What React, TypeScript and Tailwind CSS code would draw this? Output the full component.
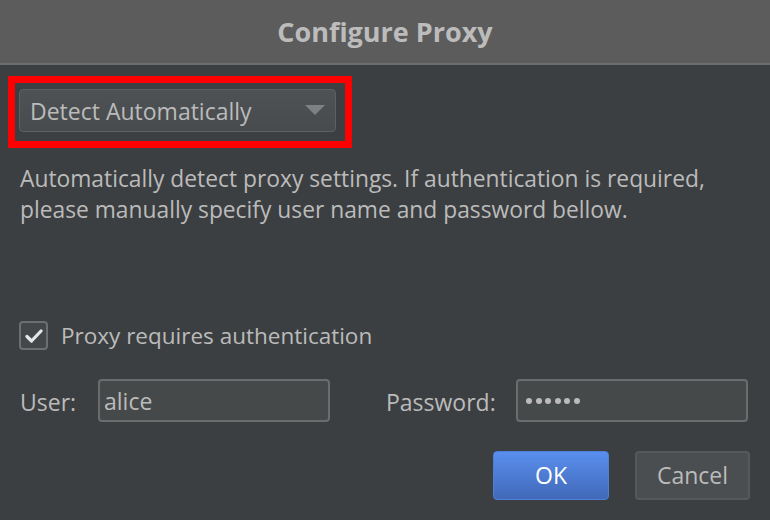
import React from "react";

export default function App() {
  const font = { fontFamily: '"Open Sans", "Noto Sans", sans-serif' };
  return (
    <div className="w-[770px] h-[520px] bg-[#3c3f41] flex flex-col overflow-hidden text-[#bbbbbb]" style={font}>
      <div className="h-[65px] bg-[#5c5c5c] border-b-2 border-[#6e6e6e] flex items-center justify-center shrink-0">
        <span className="text-[27px] font-bold text-[#bcbcbc] leading-none">Configure Proxy</span>
      </div>
      <div className="flex flex-col px-[8px] pt-[11px]">
        <div className="w-[344px] h-[72px] border-[7px] border-[#ff0000] pl-[4px] pt-[6px]">
          <div className="w-[317px] h-[43px] rounded-[4px] border border-[#5e6162] bg-gradient-to-b from-[#4e5254] to-[#474b4d] flex items-center justify-between pl-[10px] pr-[10px]">
            <span className="text-[23px] leading-none pt-[2px]">Detect Automatically</span>
            <svg width="20" height="11" viewBox="0 0 20 11">
              <polygon points="0,0 20,0 10,10" fill="#7e8183" />
            </svg>
          </div>
        </div>
      </div>
      <div className="px-[20px] pt-[15px] text-[22.8px] leading-[31px]">
        <p>Automatically detect proxy settings. If authentication is required,</p>
        <p>please manually specify user name and password bellow.</p>
      </div>
      <div className="px-[19px] pt-[96px] flex items-center gap-[13px]">
        <div className="w-[29px] h-[29px] rounded-[4px] border-2 border-[#6c6e70] bg-[#43474a] flex items-center justify-center">
          <svg width="18" height="14" viewBox="0 0 18 14">
            <path d="M2 7.5 L6.5 12 L16 2" stroke="#e6e6e6" strokeWidth="3.2" fill="none" strokeLinecap="round" strokeLinejoin="round" />
          </svg>
        </div>
        <span className="text-[22.5px] leading-none pt-[2px]">Proxy requires authentication</span>
      </div>
      <div className="px-[20px] pt-[29px] flex items-center">
        <span className="text-[23px] w-[78px] leading-none pt-[4px]">User:</span>
        <div className="w-[232px] h-[43px] rounded-[4px] border-2 border-[#6a6c6e] bg-[#45494a] flex items-center px-[4px]">
          <span className="text-[23px] leading-none pt-[2px]">alice</span>
        </div>
        <span className="text-[23px] ml-[56px] w-[130px] leading-none pt-[4px]">Password:</span>
        <div className="w-[232px] h-[43px] rounded-[4px] border-2 border-[#6a6c6e] bg-[#45494a] flex items-center pl-[8px] gap-[3.5px]">
          {[0, 1, 2, 3, 4, 5].map((i) => (
            <span key={i} className="w-[6px] h-[6px] rounded-full bg-[#bbbbbb] inline-block" />
          ))}
        </div>
      </div>
      <div className="flex justify-end pr-[20px] pt-[29px] gap-[26px]">
        <div className="w-[116px] h-[49px] rounded-[4px] border border-[#4d7fd9] bg-gradient-to-b from-[#5a8fef] to-[#4169b8] flex items-center justify-center">
          <span className="text-[23px] text-white leading-none">OK</span>
        </div>
        <div className="w-[115px] h-[49px] rounded-[4px] border-2 border-[#56595b] bg-[#4b4e50] flex items-center justify-center">
          <span className="text-[23px] leading-none">Cancel</span>
        </div>
      </div>
    </div>
  );
}
